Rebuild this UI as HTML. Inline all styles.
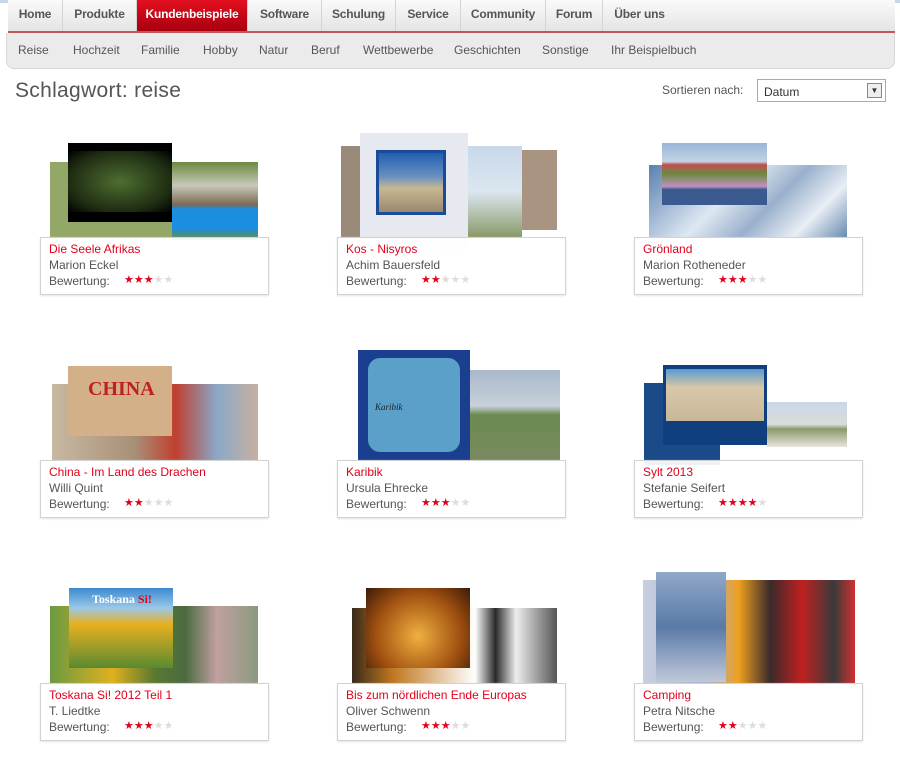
<!DOCTYPE html>
<html><head><meta charset="utf-8"><style>
*{margin:0;padding:0;box-sizing:border-box}
body{width:900px;height:772px;background:#fff;font-family:"Liberation Sans",Arial,sans-serif;position:relative;overflow:hidden}
.abs{position:absolute}
.topline{left:0;top:0;width:900px;height:3px;background:#c8d8ea}
.nav{left:8px;top:0;width:887px;height:33px;background:linear-gradient(#fafafa,#e4e4e4);border-bottom:2px solid #c0575d;display:flex}
.nav a{display:block;height:31px;padding-top:7px;text-align:center;font-size:12px;font-weight:bold;color:#555;border-right:1px solid #d4d4d4;letter-spacing:-.2px}
.nav a.on{background:linear-gradient(#e2101f,#a80010);color:#fff}
.sub{left:6px;top:33px;width:889px;height:36px;background:#ebebeb;border-radius:0 0 8px 8px;border:1px solid #d8d8d8;border-top:none}
.sub span{position:absolute;top:10px;font-size:12px;color:#555}
h1{position:absolute;left:15px;top:79px;font-size:21px;font-weight:normal;color:#555;letter-spacing:.3px}
.sort{left:662px;top:83px;font-size:12px;color:#555}
.sel{left:757px;top:79px;width:129px;height:23px;border:1px solid #aaa;font-size:12px;color:#333;padding:5px 0 0 6px}
.sel i{position:absolute;right:3px;top:3px;width:15px;height:15px;border:1px solid #888;background:#eee;font-style:normal;font-size:8px;text-align:center;line-height:14px}
.card{position:absolute;width:229px;height:58px;border:1px solid #d2d2d2;background:rgba(255,255,255,.93);box-shadow:0 1px 2px #e4e4e4}
.card b{position:absolute;left:8px;top:4px;font-weight:normal;font-size:12px;color:#e2001a}
.card p{position:absolute;left:8px;font-size:12px;color:#555}
.card .n{top:20px}.card .r{top:36px}
.st{position:absolute;left:83px;top:35px;font-size:11px;letter-spacing:0;color:#e2001a}
.st em{font-style:normal;color:#ddd}
</style></head><body>
<div class="abs topline"></div>
<div class="abs nav">
<a style="width:55px">Home</a><a style="width:74px">Produkte</a><a class="on" style="width:111px">Kundenbeispiele</a><a style="width:74px">Software</a><a style="width:74px">Schulung</a><a style="width:65px">Service</a><a style="width:85px">Community</a><a style="width:57px">Forum</a><a style="width:73px;border:none">Über uns</a>
</div>
<div class="abs sub">
<span style="left:11px">Reise</span><span style="left:66px">Hochzeit</span><span style="left:134px">Familie</span><span style="left:196px">Hobby</span><span style="left:252px">Natur</span><span style="left:304px">Beruf</span><span style="left:356px">Wettbewerbe</span><span style="left:447px">Geschichten</span><span style="left:535px">Sonstige</span><span style="left:604px">Ihr Beispielbuch</span>
</div>
<h1>Schlagwort: reise</h1>
<div class="abs sort">Sortieren nach:</div>
<div class="abs sel">Datum<i>▼</i></div>

<div class="abs" style="left:50px;top:162px;width:122px;height:76px;background:#93a866"></div>
<div class="abs" style="left:172px;top:162px;width:86px;height:78px;background:linear-gradient(#6a8a40 0,#c8c8b8 30%,#7a6a55 55%,#1c8ee0 60%,#1c8ee0 85%,#6a8a40 100%)"></div>
<div class="abs" style="left:68px;top:143px;width:104px;height:79px;background:radial-gradient(#4e6e30,#1e2c12 70%,#000);border-top:8px solid #000;border-bottom:10px solid #000"></div>

<div class="abs" style="left:341px;top:146px;width:20px;height:91px;background:#9a8a7a"></div>
<div class="abs" style="left:360px;top:133px;width:108px;height:118px;background:#e6eaf0"></div>
<div class="abs" style="left:376px;top:150px;width:70px;height:65px;background:linear-gradient(#2060b0,#6a90c0 40%,#c8b890 60%,#9a8870);border:3px solid #1a4a9a"></div>
<div class="abs" style="left:468px;top:146px;width:54px;height:91px;background:linear-gradient(#c8d8ea,#dce6f0 50%,#8a9a6a)"></div>
<div class="abs" style="left:522px;top:150px;width:35px;height:80px;background:#a89480"></div>

<div class="abs" style="left:649px;top:165px;width:198px;height:72px;background:linear-gradient(135deg,#5a80b0,#dfe8f2 40%,#9ab0cc 60%,#e8eef4 80%,#6a8ab0)"></div>
<div class="abs" style="left:662px;top:143px;width:105px;height:62px;background:linear-gradient(#9ab6d6,#c0d4e4 30%,#c05050 35%,#6a8a40 50%,#c090c0 70%,#3a5a90 75%,#3a5a90)"></div>

<div class="abs" style="left:52px;top:384px;width:206px;height:76px;background:linear-gradient(90deg,#c8b8a0,#a89078 40%,#c04030 60%,#8aa8c8 80%,#c8b0a0)"></div>
<div class="abs" style="left:68px;top:366px;width:104px;height:70px;background:#d4b088"></div>
<div class="abs" style="left:88px;top:378px;font:bold 20px 'Liberation Serif',serif;color:#c02020">CHINA</div>

<div class="abs" style="left:470px;top:370px;width:90px;height:90px;background:linear-gradient(#a8b8cc,#c8d0d8 40%,#6a8a50 50%,#7a8a60)"></div>
<div class="abs" style="left:358px;top:350px;width:112px;height:110px;background:#1a3f8f"></div>
<div class="abs" style="left:368px;top:358px;width:92px;height:94px;background:#5aa0c8;border-radius:12px"></div>
<div class="abs" style="left:375px;top:402px;font:italic 9px 'Liberation Serif',serif;color:#222">Karibik</div>

<div class="abs" style="left:644px;top:383px;width:76px;height:82px;background:#1a4a88"></div>
<div class="abs" style="left:767px;top:402px;width:80px;height:45px;background:linear-gradient(#c8d8e8,#d8dcd8 50%,#8a9a6a 60%,#e8e4dc)"></div>
<div class="abs" style="left:663px;top:365px;width:104px;height:80px;background:#0f3f7f"></div>
<div class="abs" style="left:666px;top:369px;width:98px;height:52px;background:linear-gradient(#5a9ad0,#d8c8a8 35%,#c8b89a)"></div>

<div class="abs" style="left:50px;top:606px;width:208px;height:77px;background:linear-gradient(90deg,#6a9a40,#e0b020 30%,#5a7a30 50%,#4a6a40 65%,#c0a0a0 80%,#8a9a80)"></div>
<div class="abs" style="left:69px;top:588px;width:104px;height:80px;background:linear-gradient(#3a8ad0,#9ac8e8 25%,#e8b020 45%,#5a8a30)"></div>
<div class="abs" style="left:92px;top:592px;font:bold 12px 'Liberation Serif',serif;color:#fff">Toskana <span style="color:#e0001a">Si!</span></div>

<div class="abs" style="left:352px;top:608px;width:205px;height:75px;background:linear-gradient(90deg,#3a2a1a,#c07820 20%,#fff 60%,#2a2a2a 70%,#eee 80%,#555)"></div>
<div class="abs" style="left:366px;top:588px;width:104px;height:80px;background:radial-gradient(circle at 50% 60%,#f0b040,#a05010 60%,#3a1a08)"></div>

<div class="abs" style="left:643px;top:580px;width:212px;height:103px;background:linear-gradient(90deg,#c8d0e0,#a0b0d0 30%,#f0a020 45%,#3a2a2a 60%,#c02020 75%,#3a3a3a 90%,#d03030)"></div>
<div class="abs" style="left:656px;top:572px;width:70px;height:110px;background:linear-gradient(#90a8c8,#5a7aa8 50%,#c0c8d8)"></div>

<div class="card" style="left:40px;top:237px"><b>Die Seele Afrikas</b><p class="n">Marion Eckel</p><p class="r">Bewertung:</p><span class="st">★★★<em>★★</em></span></div>
<div class="card" style="left:337px;top:237px"><b>Kos - Nisyros</b><p class="n">Achim Bauersfeld</p><p class="r">Bewertung:</p><span class="st">★★<em>★★★</em></span></div>
<div class="card" style="left:634px;top:237px"><b>Grönland</b><p class="n">Marion Rotheneder</p><p class="r">Bewertung:</p><span class="st">★★★<em>★★</em></span></div>
<div class="card" style="left:40px;top:460px"><b>China - Im Land des Drachen</b><p class="n">Willi Quint</p><p class="r">Bewertung:</p><span class="st">★★<em>★★★</em></span></div>
<div class="card" style="left:337px;top:460px"><b>Karibik</b><p class="n">Ursula Ehrecke</p><p class="r">Bewertung:</p><span class="st">★★★<em>★★</em></span></div>
<div class="card" style="left:634px;top:460px"><b>Sylt 2013</b><p class="n">Stefanie Seifert</p><p class="r">Bewertung:</p><span class="st">★★★★<em>★</em></span></div>
<div class="card" style="left:40px;top:683px"><b>Toskana Si! 2012 Teil 1</b><p class="n">T. Liedtke</p><p class="r">Bewertung:</p><span class="st">★★★<em>★★</em></span></div>
<div class="card" style="left:337px;top:683px"><b>Bis zum nördlichen Ende Europas</b><p class="n">Oliver Schwenn</p><p class="r">Bewertung:</p><span class="st">★★★<em>★★</em></span></div>
<div class="card" style="left:634px;top:683px"><b>Camping</b><p class="n">Petra Nitsche</p><p class="r">Bewertung:</p><span class="st">★★<em>★★★</em></span></div>
</body></html>
